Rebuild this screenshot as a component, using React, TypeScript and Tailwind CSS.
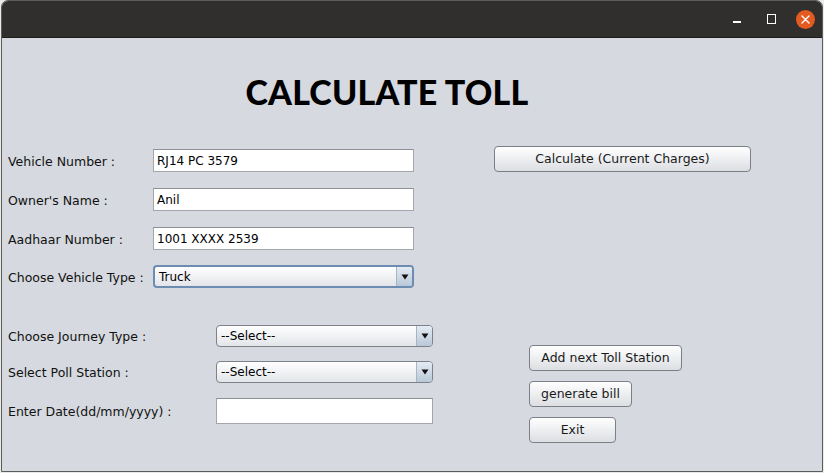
import React from "react";

const sans = { fontFamily: '"DejaVu Sans", sans-serif' };

const Field = ({ value, w }: { value?: string; w: string }) => (
  <div
    className={`${w} h-[23px] bg-white border border-[#a3a7ad] border-t-[#8d9197] flex items-center px-[3px] text-[12px] text-black`}
  >
    {value}
  </div>
);

const Combo = ({
  value,
  w,
  focused,
}: {
  value: string;
  w: string;
  focused?: boolean;
}) => (
  <div
    className={`${w} h-[22px] rounded-[4px] flex overflow-hidden bg-gradient-to-b from-white to-[#e3e5e9] text-[12px] text-black ${
      focused
        ? "border-2 border-[#6d8cb1]"
        : "border border-[#7d828a]"
    }`}
  >
    <div className="flex-1 flex items-center pl-[4px]">{value}</div>
    <div className="w-[16px] flex items-center justify-center border-l border-[#aab4c0] bg-gradient-to-b from-[#e4ebf3] to-[#b9c8d8]">
      <svg width="8" height="6" viewBox="0 0 8 6">
        <path d="M0.5 0.5 L7.5 0.5 L4 5.5 Z" fill="#111" />
      </svg>
    </div>
  </div>
);

const Button = ({ label, w }: { label: string; w: string }) => (
  <button
    className={`${w} h-[26px] rounded-[4px] border border-[#7b8088] bg-gradient-to-b from-white to-[#dcdee2] text-[12.5px] text-[#1a1a1a] flex items-center justify-center`}
  >
    {label}
  </button>
);

const Label = ({ text }: { text: string }) => (
  <span className="text-[12.5px] text-[#111]">{text}</span>
);

export default function App() {
  return (
    <div className="w-[824px] h-[473px] bg-[#eceae6] pl-[1px]" style={sans}>
      <div className="w-[822px] h-[472px] flex flex-col border border-[#5c5c5c] rounded-t-[7px] overflow-hidden bg-[#d6d9df]">
        {/* title bar */}
        <div className="h-[37px] shrink-0 bg-[#302f2d] border-b border-[#1d1d1c] flex items-center justify-end pr-[7px]">
          <span className="w-[8px] h-[2px] bg-white mt-[6px]" />
          <span className="w-[9px] h-[10px] border border-white ml-[26px]" />
          <span className="w-[19px] h-[19px] rounded-full bg-[#e45b21] flex items-center justify-center ml-[20px]">
            <svg width="9" height="9" viewBox="0 0 9 9">
              <path
                d="M1 1 L8 8 M8 1 L1 8"
                stroke="white"
                strokeWidth="1.4"
                strokeLinecap="round"
              />
            </svg>
          </span>
        </div>

        {/* heading */}
        <div className="h-[108px] shrink-0 flex items-center justify-center pb-[2px] pr-[50px]">
          <h1
            className="text-[34px] font-black tracking-[0.2px] text-black"
            style={{ fontFamily: 'Lato, "DejaVu Sans", sans-serif' }}
          >
            CALCULATE TOLL
          </h1>
        </div>

        {/* upper form */}
        <div className="flex pl-[6px]">
          <div className="flex flex-col">
            <div className="flex items-center h-[27px] mt-[1px]">
              <div className="w-[145px]">
                <Label text="Vehicle Number :" />
              </div>
              <Field value="RJ14 PC 3579" w="w-[261px]" />
            </div>
            <div className="flex items-center h-[27px] mt-[12px]">
              <div className="w-[145px]">
                <Label text="Owner's Name :" />
              </div>
              <Field value="Anil" w="w-[261px]" />
            </div>
            <div className="flex items-center h-[27px] mt-[12px]">
              <div className="w-[145px]">
                <Label text="Aadhaar Number :" />
              </div>
              <Field value="1001 XXXX 2539" w="w-[261px]" />
            </div>
            <div className="flex items-center h-[27px] mt-[11px]">
              <div className="w-[145px]">
                <Label text="Choose Vehicle Type :" />
              </div>
              <Combo value="Truck" w="w-[261px] h-[23px]" focused />
            </div>
          </div>
          <div className="ml-[80px] mt-[0px]">
            <Button label="Calculate (Current Charges)" w="w-[257px]" />
          </div>
        </div>

        {/* lower form */}
        <div className="flex pl-[6px] mt-[35px]">
          <div className="flex flex-col">
            <div className="flex items-center h-[22px]">
              <div className="w-[208px]">
                <Label text="Choose Journey Type :" />
              </div>
              <Combo value="--Select--" w="w-[217px]" />
            </div>
            <div className="flex items-center h-[22px] mt-[14px]">
              <div className="w-[208px]">
                <Label text="Select Poll Station :" />
              </div>
              <Combo value="--Select--" w="w-[217px]" />
            </div>
            <div className="flex items-center h-[26px] mt-[15px]">
              <div className="w-[208px]">
                <Label text="Enter Date(dd/mm/yyyy) :" />
              </div>
              <Field w="w-[217px] h-[26px]" />
            </div>
          </div>
          <div className="ml-[96px] mt-[20px] flex flex-col gap-[10px]">
            <Button label="Add next Toll Station" w="w-[153px]" />
            <Button label="generate bill" w="w-[103px]" />
            <Button label="Exit" w="w-[87px]" />
          </div>
        </div>
      </div>
    </div>
  );
}
